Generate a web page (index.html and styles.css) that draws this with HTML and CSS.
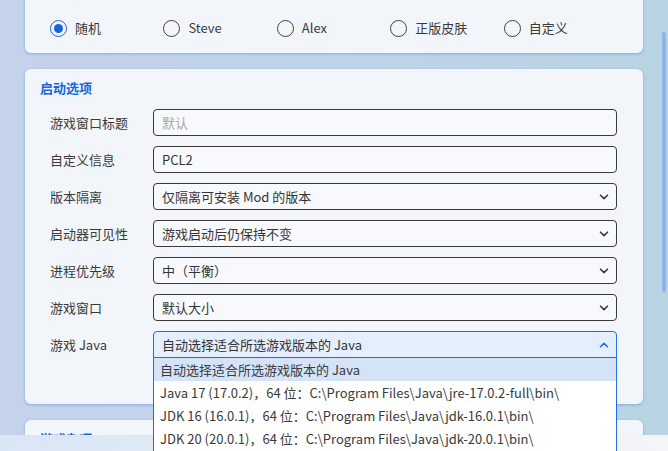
FILE: index.html
```html
<!DOCTYPE html>
<html lang="zh-CN">
<head>
<meta charset="utf-8">
<title>启动选项</title>
<link rel="stylesheet" href="styles.css">
</head>
<body>
<div class="page">
  <div class="scroller">
    <section class="card card-skin">
      <h2 class="card-title">离线皮肤</h2>
      <div class="radios">
        <label class="radio checked"><span class="dot"></span>随机</label>
        <label class="radio"><span class="dot"></span>Steve</label>
        <label class="radio"><span class="dot"></span>Alex</label>
        <label class="radio"><span class="dot"></span>正版皮肤</label>
        <label class="radio"><span class="dot"></span>自定义</label>
      </div>
    </section>

    <section class="card card-launch">
      <h2 class="card-title">启动选项</h2>
      <div class="rows">
        <div class="row"><span class="label">游戏窗口标题</span><div class="field"><span class="placeholder">默认</span></div></div>
        <div class="row"><span class="label">自定义信息</span><div class="field">PCL2</div></div>
        <div class="row"><span class="label">版本隔离</span><div class="field select">仅隔离可安装 Mod 的版本<svg class="chev" viewBox="0 0 10 6"><path d="M1.5 1.2 5 4.6 8.5 1.2"/></svg></div></div>
        <div class="row"><span class="label">启动器可见性</span><div class="field select">游戏启动后仍保持不变<svg class="chev" viewBox="0 0 10 6"><path d="M1.5 1.2 5 4.6 8.5 1.2"/></svg></div></div>
        <div class="row"><span class="label">进程优先级</span><div class="field select">中（平衡）<svg class="chev" viewBox="0 0 10 6"><path d="M1.5 1.2 5 4.6 8.5 1.2"/></svg></div></div>
        <div class="row"><span class="label">游戏窗口</span><div class="field select">默认大小<svg class="chev" viewBox="0 0 10 6"><path d="M1.5 1.2 5 4.6 8.5 1.2"/></svg></div></div>
        <div class="row"><span class="label">游戏 Java</span>
          <div class="field select open">自动选择适合所选游戏版本的 Java<svg class="chev up" viewBox="0 0 10 6"><path d="M1.5 4.8 5 1.4 8.5 4.8"/></svg>
            <ul class="menu">
              <li class="active">自动选择适合所选游戏版本的 Java</li>
              <li>Java 17 (17.0.2)，64 位：C:\Program Files\Java\jre-17.0.2-full\bin\</li>
              <li>JDK 16 (16.0.1)，64 位：C:\Program Files\Java\jdk-16.0.1\bin\</li>
              <li>JDK 20 (20.0.1)，64 位：C:\Program Files\Java\jdk-20.0.1\bin\</li>
            </ul>
          </div>
        </div>
      </div>
    </section>

    <section class="card card-misc">
      <h2 class="card-title">游戏杂项</h2>
    </section>
  </div>
  <div class="scrollbar"></div>
  <div class="bottombar"></div>
</div>
</body>
</html>
```

FILE: styles.css
```css
* { box-sizing: border-box; }
html, body { margin: 0; padding: 0; }
body {
  width: 668px;
  height: 451px;
  overflow: hidden;
  font-family: "Noto Sans CJK SC", "Noto Sans", sans-serif;
  font-size: 13px;
  color: #343434;
  background: linear-gradient(90deg, #c5d2ec 0%, #c0d4ea 45%, #b8d4e2 100%);
}
.page {
  position: relative;
  width: 668px;
  height: 451px;
  overflow: hidden;
}
.scroller {
  display: flex;
  flex-direction: column;
  gap: 16px;
  padding: 0 25px;
  margin-top: -26px;
}
.card {
  background: #f2f6fb;
  border-radius: 6px;
  box-shadow: 0 1px 3px rgba(60, 120, 210, 0.45);
  padding: 10px 26px 0 15px;
}
.card-title {
  margin: 0;
  font-size: 13px;
  line-height: 18px;
  font-weight: bold;
  color: #1767d8;
}
.card-skin { padding-bottom: 15px; }
.radios {
  display: flex;
  padding-left: 10px;
  margin-top: 16px;
}
.radio {
  width: 114px;
  display: flex;
  align-items: center;
  gap: 8px;
  line-height: 20px;
  color: #3a3a3a;
}
.dot {
  width: 17px;
  height: 17px;
  border-radius: 50%;
  border: 1.5px solid #404040;
  flex: none;
  display: flex;
  align-items: center;
  justify-content: center;
}
.radio.checked .dot { border-color: #1a66d9; }
.radio.checked .dot::after {
  content: "";
  width: 9px;
  height: 9px;
  border-radius: 50%;
  background: #1a66d9;
}
.card-launch { padding-bottom: 46px; }
.rows {
  display: flex;
  flex-direction: column;
  gap: 10px;
  margin-top: 12px;
  padding-left: 10px;
}
.row {
  display: flex;
  align-items: center;
}
.label {
  width: 103px;
  flex: none;
  color: #3a3a3a;
}
.field {
  position: relative;
  flex: 1;
  height: 27px;
  border: 1px solid #3a3a3a;
  border-radius: 4px;
  background: #f7f9fd;
  padding: 0 8px;
  display: flex;
  align-items: center;
  color: #343434;
}
.placeholder { color: #a8a8a8; }
.chev {
  position: absolute;
  right: 7px;
  top: 10px;
  width: 10px;
  height: 6px;
  fill: none;
  stroke: #3a3a3a;
  stroke-width: 1.6;
  stroke-linecap: round;
  stroke-linejoin: round;
}
.field.open {
  border-color: #1e6fe0;
  background: #e4eefc;
  border-bottom-left-radius: 0;
  border-bottom-right-radius: 0;
}
.chev.up { stroke: #1e6fe0; }
.menu {
  position: absolute;
  left: -1px;
  right: -1px;
  top: 26px;
  margin: 0;
  padding: 0;
  list-style: none;
  background: #ffffff;
  border: 1px solid #1e6fe0;
  border-top: none;
  z-index: 5;
  height: 100px;
}
.menu li {
  height: 23px;
  line-height: 23px;
  padding: 0 6px;
  white-space: nowrap;
  color: #3a3a3a;
}
.menu li.active { background: #d4e3f8; }
.card-misc { height: 60px; padding-top: 10px; }
.scrollbar {
  position: absolute;
  left: 662px;
  top: 32px;
  width: 4px;
  height: 260px;
  border-radius: 2px;
  background: #8db4ec;
}
.bottombar {
  position: absolute;
  left: 0;
  right: 0;
  bottom: 0;
  height: 16px;
  background: linear-gradient(90deg, #d9e6f5 0%, #e2ebf6 40%, #f4f5f7 100%);
  z-index: 3;
}
```
